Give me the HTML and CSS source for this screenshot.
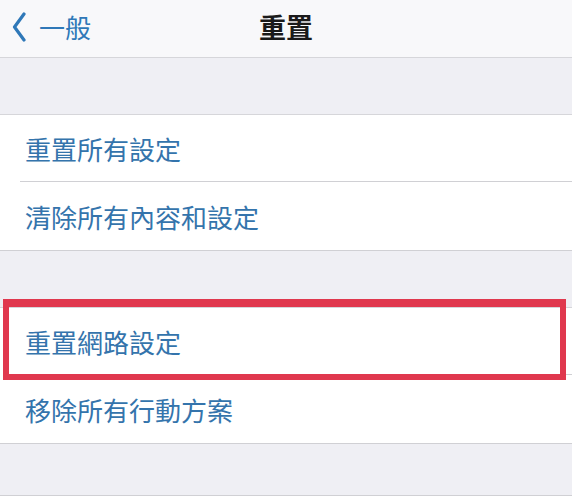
FILE: index.html
```html
<!DOCTYPE html>
<html lang="zh-Hant">
<head>
    <meta charset="UTF-8">
    <meta name="viewport" content="width=device-width, initial-scale=1.0">
    <title>重置</title>
    <link rel="stylesheet" href="styles.css">
</head>
<body>

    <!-- Navigation bar -->
    <div class="nav-bar">
        <a class="back-link" href="#">
            <svg class="chevron" width="14" height="30" viewBox="0 0 14 30">
                <path d="M12 2 L2.5 15 L12 28" fill="none" stroke="currentColor" stroke-width="3.2" stroke-linecap="round" stroke-linejoin="round"/>
            </svg>
            <span>一般</span>
        </a>
        <h1 class="nav-title">重置</h1>
        <div></div>
    </div>

    <div class="gap"></div>

    <div class="group">
        <div class="row">重置所有設定</div>
        <div class="row">清除所有內容和設定</div>
    </div>

    <div class="gap"></div>

    <div class="group">
        <div class="row highlighted">重置網路設定</div>
        <div class="row">移除所有行動方案</div>
    </div>

    <div class="gap gap-last"></div>

</body>
</html>
```

FILE: styles.css
```css
* {
    margin: 0;
    padding: 0;
    box-sizing: border-box;
}

body {
    font-family: "Noto Sans CJK TC", "Noto Sans CJK SC", sans-serif;
    background-color: #ffffff;
    width: 572px;
}

.nav-bar {
    display: grid;
    grid-template-columns: 1fr auto 1fr;
    align-items: center;
    height: 58px;
    background-color: #f8f8fa;
    border-bottom: 1px solid #d6d6da;
}

.back-link {
    display: flex;
    align-items: center;
    color: #2f78b8;
    text-decoration: none;
    font-size: 26px;
    padding-left: 12px;
    gap: 13px;
    margin-top: -4px;
}

.chevron {
    display: block;
}

.nav-title {
    font-size: 27px;
    font-weight: bold;
    color: #1a1a1a;
    margin-top: -4px;
}

.gap {
    height: 56px;
    background-color: #efeff4;
}

.gap-last {
    height: 52px;
    border-bottom: 1px solid #d0d0d4;
}

.group {
    background-color: #ffffff;
    border-top: 1px solid #d6d6da;
    border-bottom: 1px solid #d0d0d4;
}

.row {
    position: relative;
    display: flex;
    align-items: center;
    height: 68px;
    margin-left: 20px;
    padding-left: 5px;
    font-size: 26px;
    color: #3474ac;
    border-bottom: 1px solid #d0d0d4;
}

.row:first-child {
    height: 67px;
}

.row:last-child {
    border-bottom: none;
}

/* red box drawn over the network reset row */
.row.highlighted::after {
    content: "";
    position: absolute;
    top: -9px;
    bottom: -6px;
    left: -17px;
    right: 6px;
    border: 6px solid #e0384e;
    border-top-width: 8px;
}
```
